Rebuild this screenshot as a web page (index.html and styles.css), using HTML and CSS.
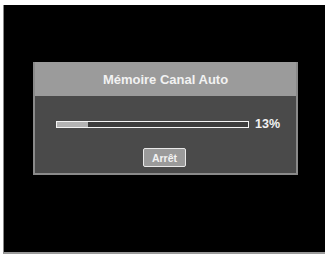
FILE: index.html
```html
<!DOCTYPE html>
<html lang="fr">
<head>
<meta charset="utf-8">
<link rel="stylesheet" href="styles.css">
</head>
<body>
<div class="screen">
  <div class="dialog">
    <div class="title">Mémoire Canal Auto</div>
    <div class="content">
      <div class="progress-row">
        <div class="bar"><div class="fill" style="width:16%"></div></div>
        <span class="pct">13%</span>
      </div>
      <div class="actions">
        <button class="btn">Arrêt</button>
      </div>
    </div>
  </div>
</div>
</body>
</html>
```
FILE: styles.css
```css
html, body {
  margin: 0;
  padding: 0;
  background: #ffffff;
}
body {
  width: 325px;
  height: 254px;
  overflow: hidden;
  font-family: "Liberation Sans", Arial, sans-serif;
}
.screen {
  box-sizing: border-box;
  margin: 5px 0 0 3px;
  width: 322px;
  height: 249px;
  background: #000;
  border-left: 1px solid #888;
  border-bottom: 2px solid #9a9a9a;
  padding: 57px 0 0 29px;
}
.dialog {
  box-sizing: border-box;
  width: 265px;
  height: 113px;
  background: #4a4a4a;
  border: 2px solid #8a8a8a;
  border-top: 0;
  display: flex;
  flex-direction: column;
}
.title {
  height: 34px;
  background: #9b9b9b;
  color: #f2f2f2;
  font-weight: bold;
  font-size: 13px;
  display: flex;
  align-items: center;
  justify-content: center;
}
.content {
  flex: 1;
  display: flex;
  flex-direction: column;
}
.progress-row {
  display: flex;
  align-items: center;
  margin: 22px 0 0 21px;
  gap: 6px;
}
.bar {
  box-sizing: border-box;
  width: 193px;
  height: 7px;
  border: 1px solid #f4f4f4;
  background: #3c3c3c;
}
.fill {
  height: 100%;
  background: #b4b4b4;
}
.pct {
  color: #f2f2f2;
  font-weight: bold;
  font-size: 12.5px;
  line-height: 12px;
}
.actions {
  display: flex;
  justify-content: center;
  margin-top: 18px;
  padding-right: 2px;
}
.btn {
  box-sizing: border-box;
  width: 43px;
  height: 19px;
  padding: 0;
  background: #9a9a9a;
  border: 1px solid #e8e8e8;
  border-radius: 2px;
  color: #f2f2f2;
  font-family: "Liberation Sans", Arial, sans-serif;
  font-weight: bold;
  font-size: 10.5px;
}
```
